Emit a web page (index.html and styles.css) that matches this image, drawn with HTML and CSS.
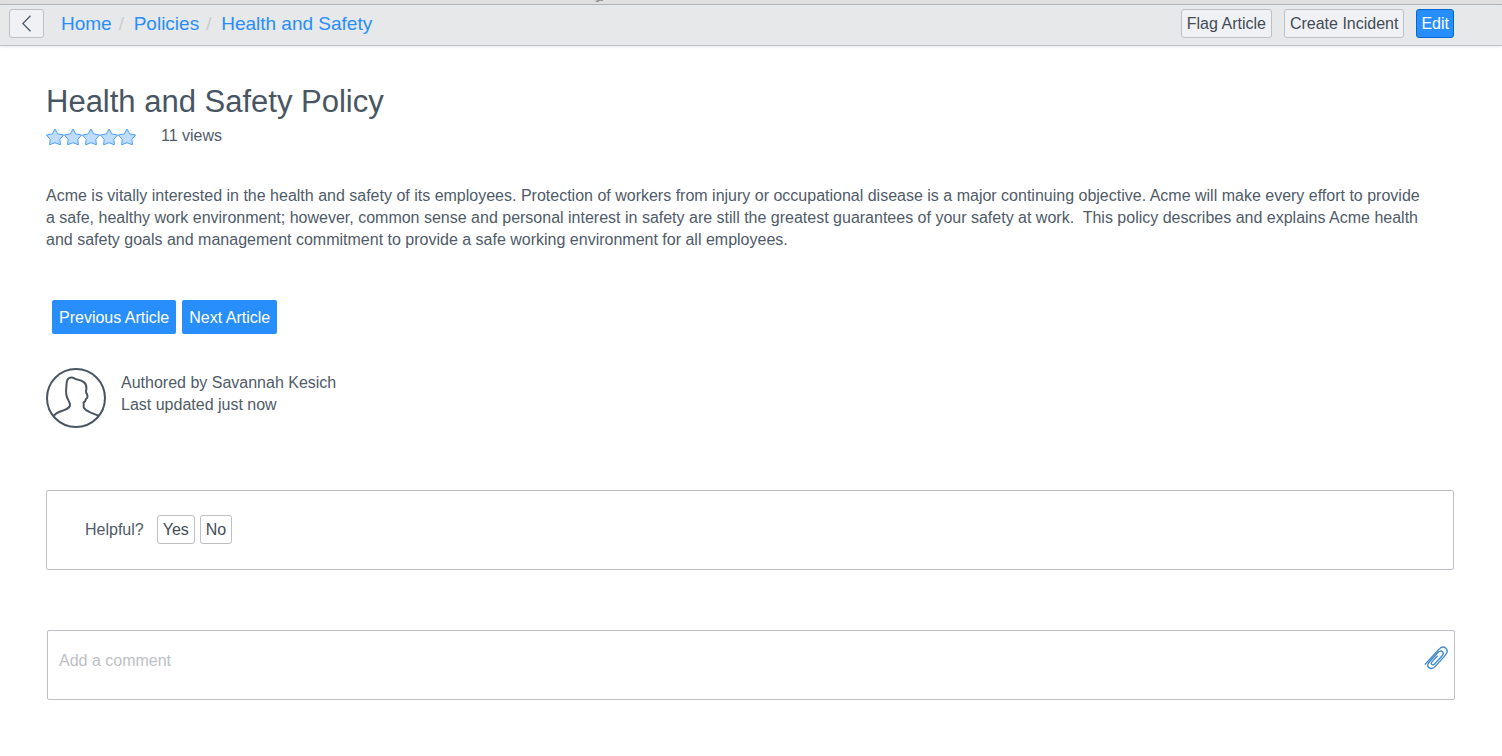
FILE: index.html
```html
<!DOCTYPE html>
<html lang="en">
  <head>
    <meta charset="UTF-8" />
    <meta name="viewport" content="width=device-width, initial-scale=1" />
    <title>Health and Safety Policy</title>
    <link rel="stylesheet" href="styles.css">
  </head>
  <body>
    <svg class="sprite" aria-hidden="true">
      <symbol id="star" viewBox="0 0 18 18">
        <path d="M9 1 L11.6 5.9 L17.6 7 L13.8 11.3 L14.4 16.8 L9 14.7 L3.6 16.8 L4.2 11.3 L.4 7 L6.4 5.9 Z" />
      </symbol>
    </svg>

    <div class="strip">
      <svg class="strip-mark" viewBox="0 0 8 2" aria-hidden="true">
        <path d="M2 0h6v1H4v1H0z" />
      </svg>
    </div>

    <header class="navbar">
      <button type="button" class="btn btn-back" aria-label="Back">
        <svg viewBox="0 0 10 17" aria-hidden="true">
          <path d="M8.5 .8 L.8 8.5 L8.5 16.2" />
        </svg>
      </button>
      <nav class="breadcrumb" aria-label="Breadcrumb">
        <a href="#">Home</a>
        <span class="sep">/</span>
        <a href="#">Policies</a>
        <span class="sep">/</span>
        <a href="#">Health and Safety</a>
      </nav>
      <div class="actions">
        <button type="button" class="btn">Flag Article</button>
        <button type="button" class="btn">Create Incident</button>
        <button type="button" class="btn btn-edit">Edit</button>
      </div>
    </header>

    <main class="article">
      <h1>Health and Safety Policy</h1>
      <div class="meta">
        <span class="stars" role="img" aria-label="Rating">
          <svg><use href="#star" /></svg>
          <svg><use href="#star" /></svg>
          <svg><use href="#star" /></svg>
          <svg><use href="#star" /></svg>
          <svg><use href="#star" /></svg>
        </span>
        <span>11 views</span>
      </div>

      <p class="content">
        Acme is vitally interested in the health and safety of its employees.
        Protection of workers from injury or occupational disease is a major
        continuing objective. Acme will make every effort to provide a safe,
        healthy work environment; however, common sense and personal interest in
        safety are still the greatest guarantees of your safety at work.&nbsp;
        This policy describes and explains Acme health and safety goals and
        management commitment to provide a safe working environment for all
        employees.
      </p>

      <div class="pager">
        <button type="button" class="btn-page">Previous Article</button>
        <button type="button" class="btn-page">Next Article</button>
      </div>

      <div class="author">
        <svg class="avatar" viewBox="0 0 60 60" aria-hidden="true">
          <circle cx="30" cy="30" r="29" />
          <path d="M8 47.5 C10.5 44.5 14 43.6 17.5 42.4 C21.5 41 24.2 39.5 24 36.5 C23.8 33.5 21 31.5 20.3 26.5 C19.7 22.5 20.4 19 20.6 15.5 C20.8 11.5 22.5 9.6 25.5 9.6 C27.8 9.6 29 11 31 11.4 C36.5 12.8 40.6 14.5 40.4 20 C40.4 22.6 39.6 23.4 40.2 24.6 C42 27.4 42 29.8 40 31 C39.6 33 38.6 34 37.6 34.6 C38.2 36.2 37 38 38 40 C39.5 42.6 43 43.6 46 45.2 C48.5 46.4 50.5 46.6 52.5 47.8" />
        </svg>
        <div>
          <div>Authored by Savannah Kesich</div>
          <div>Last updated just now</div>
        </div>
      </div>

      <div class="helpful">
        <span>Helpful?</span>
        <button type="button" class="btn btn-vote">Yes</button>
        <button type="button" class="btn btn-vote">No</button>
      </div>

      <form class="comment">
        <textarea aria-label="Add a comment" placeholder="Add a comment"></textarea>
        <button type="button" class="attach" aria-label="Attach a file">
          <svg viewBox="0 0 24 24" aria-hidden="true">
            <path d="M.8 18.6 L14.8 3.4 C17.2 .9 20 .5 21.8 2.2 C23.8 4.2 23.4 7 21.2 9.4 L11.4 20.4 C9.2 22.8 6.4 23.2 4.8 21.6 C3.2 20 3.6 17.6 5.4 15.7 L14.2 6.3 C15.6 4.8 17.4 4.7 18.5 5.8 C19.6 6.9 19.4 8.5 18.2 9.8 L10.6 18 C9.6 19 8.4 19 7.7 18.3 C7 17.5 7.3 16.5 8.1 15.6 L13.6 9.8" />
          </svg>
        </button>
      </form>
    </main>
  </body>
</html>
```

FILE: styles.css
```css
* {
  box-sizing: border-box;
}
body {
  margin: 0;
  font: 16px/22px "Liberation Sans", Arial, sans-serif;
  color: #4f5b69;
  background-color: #fff;
}
button {
  font: inherit;
  cursor: pointer;
}
svg {
  display: block;
}
.sprite {
  display: none;
}

/* top bar */
.strip {
  height: 5px;
  background-color: #e0e0e0;
  border-bottom: 1px solid #a9a9a9;
}
.strip-mark {
  width: 8px;
  height: 2px;
  margin-left: 39.6%;
  fill: #999;
}
.navbar {
  display: flex;
  align-items: center;
  height: 41px;
  padding: 0 48px 3px 9px;
  background-color: #e6e8ea;
  border-bottom: 1px solid #bdc0c4;
  box-shadow: 0 1px 3px #e6e8ea;
}
.btn {
  height: 29px;
  padding: 0 5px;
  line-height: 27px;
  color: #434c56;
  background-color: #f0f1f4;
  border: 1px solid #bdc0c4;
  border-radius: 3px;
}
.btn-back {
  display: flex;
  align-items: center;
  justify-content: center;
  width: 35px;
}
.btn-back svg {
  width: 10px;
  height: 17px;
  fill: none;
  stroke: #485563;
  stroke-width: 1.3;
}
.btn-edit {
  padding: 0 4px;
  color: #fff;
  background-color: #278efc;
  border-color: #0368d4;
}
.breadcrumb {
  display: flex;
  gap: 7px;
  margin-left: 17px;
  font-size: 19px;
}
.breadcrumb a {
  color: #278efc;
  text-decoration: none;
}
.breadcrumb .sep {
  width: 8px;
  color: #ccc;
}
.actions {
  display: flex;
  gap: 12px;
  margin-left: auto;
}

/* article */
.article {
  padding: 36px 48px;
  padding-left: 46px;
}
h1 {
  margin: 0;
  font-size: 31px;
  font-weight: normal;
  line-height: 40px;
  color: #485563;
}
.meta {
  display: flex;
  align-items: center;
  gap: 25px;
  margin-top: 3px;
}
.stars {
  display: flex;
  padding-top: 2px;
}
.stars svg {
  width: 18px;
  height: 18px;
  fill: #bfdcfb;
  stroke: #4a9ff8;
}
.content {
  margin: 38px 0 49px;
  padding-right: 24px;
}
.pager {
  display: flex;
  gap: 6px;
  padding-left: 6px;
}
.btn-page {
  height: 34px;
  padding: 1px 7px 0;
  color: #fff;
  background-color: #278efc;
  border: none;
  border-radius: 2px;
}
.author {
  display: flex;
  gap: 15px;
  margin-top: 34px;
  padding-bottom: 2px;
}
.author > div {
  padding-top: 4px;
}
.avatar {
  width: 60px;
  height: 60px;
  fill: none;
  stroke: #485563;
  stroke-width: 2;
}
.helpful {
  display: flex;
  align-items: flex-start;
  height: 80px;
  margin-top: 60px;
  padding: 24px 38px;
  border: 1px solid #bdc0c4;
  border-radius: 2px;
}
.helpful span {
  margin-right: 13px;
  line-height: 30px;
}
.btn-vote {
  margin-right: 5px;
  background-color: #fff;
}
.comment {
  position: relative;
  margin: 60px -1px 0 1px;
}
.comment textarea {
  display: block;
  width: 100%;
  height: 70px;
  padding: 19px 48px 18px 11px;
  font: inherit;
  color: inherit;
  border: 1px solid #bdc0c4;
  border-radius: 2px;
  resize: none;
}
.comment textarea::placeholder {
  color: #bdc0c4;
}
.attach {
  position: absolute;
  top: 16px;
  right: 7px;
  padding: 0;
  background: none;
  border: none;
}
.attach svg {
  width: 24px;
  height: 24px;
  fill: none;
  stroke: #428bca;
  stroke-width: 1.4;
}
```
